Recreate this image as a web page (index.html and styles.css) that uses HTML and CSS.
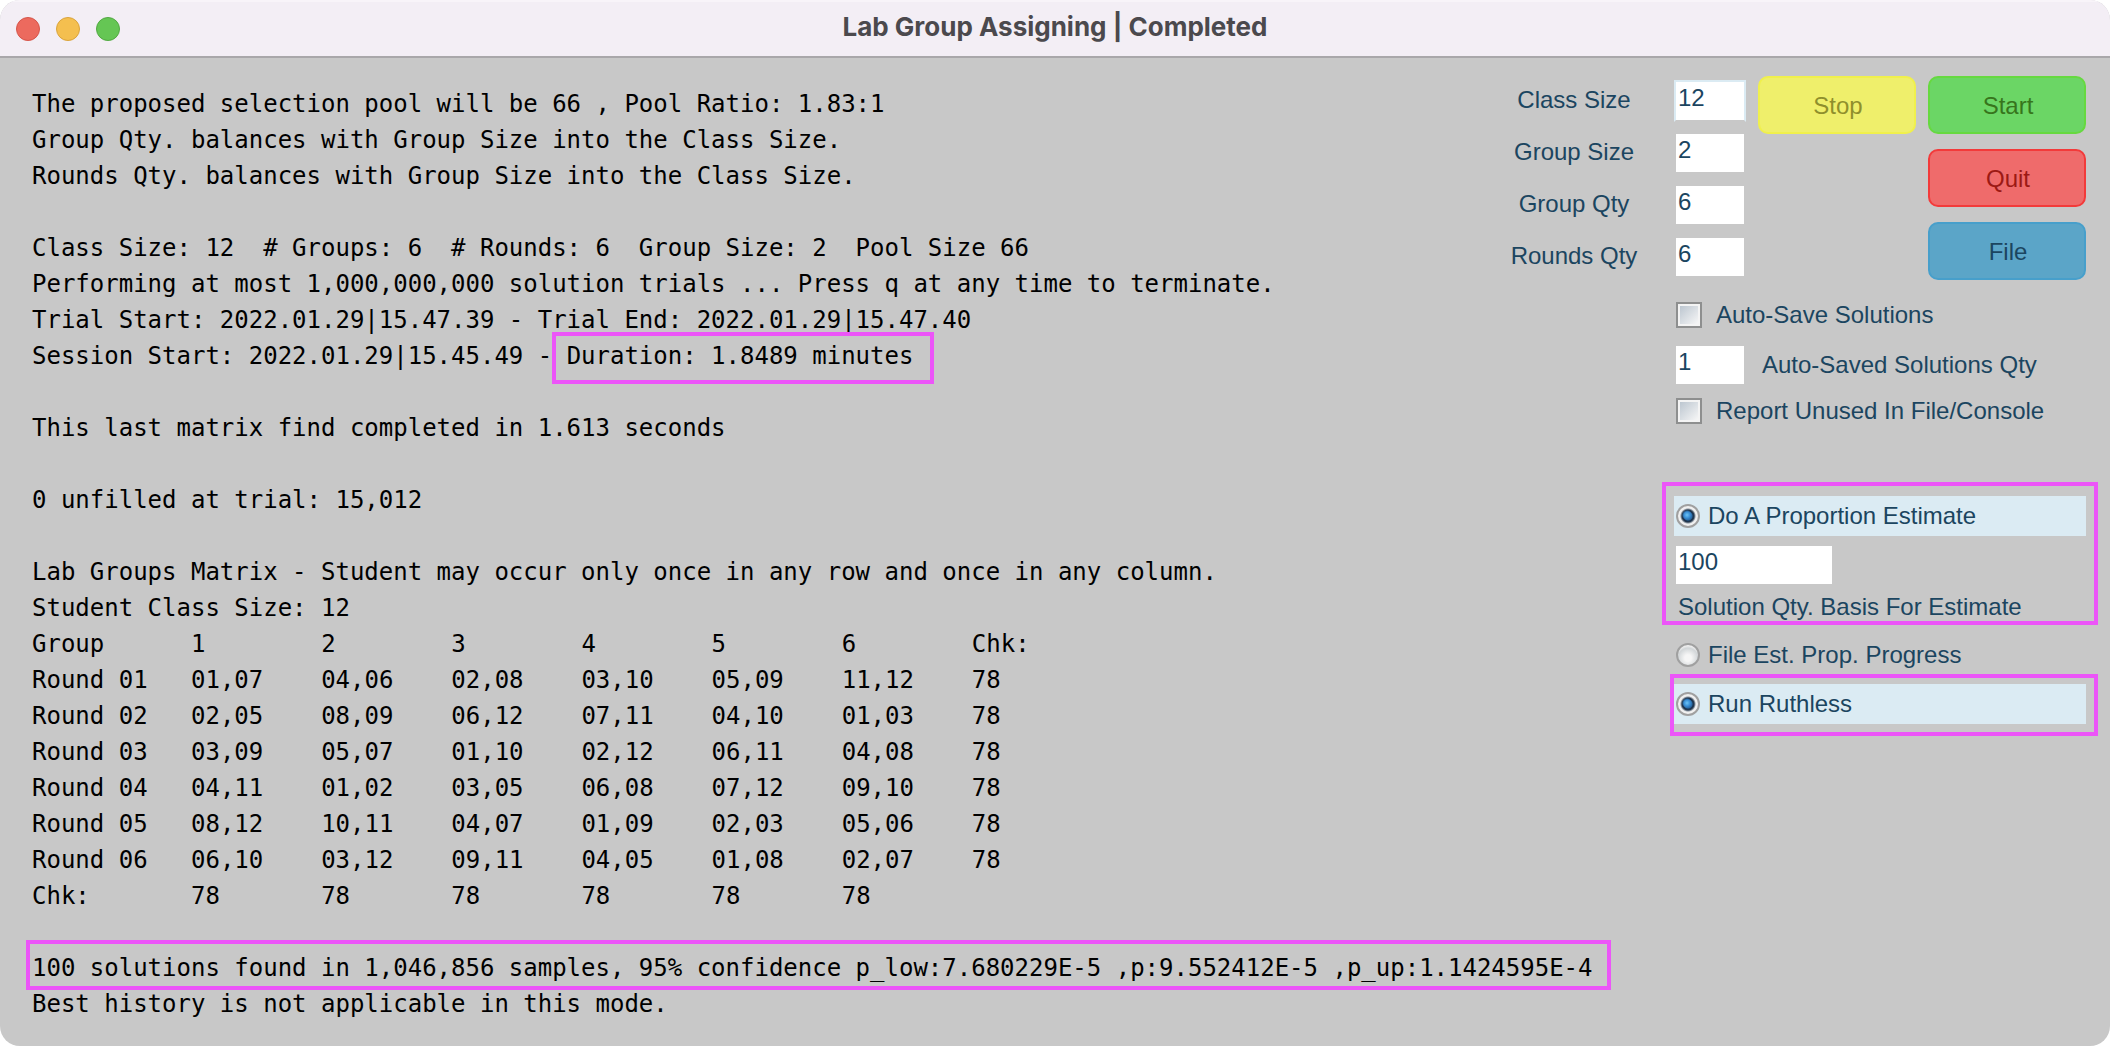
FILE: index.html
```html
<!DOCTYPE html>
<html lang="en">
<head>
<meta charset="utf-8">
<title>Lab Group Assigning | Completed</title>
<link rel="stylesheet" href="styles.css">
</head>
<body>
<div class="window">
  <header class="titlebar">
    <div class="lights">
      <button class="light light-close" type="button" aria-label="Close"></button>
      <button class="light light-minimize" type="button" aria-label="Minimize"></button>
      <button class="light light-zoom" type="button" aria-label="Zoom"></button>
    </div>
    <h1 class="title">Lab Group Assigning | Completed</h1>
  </header>
  <div class="content">
    <main class="console">
      <p class="line">The proposed selection pool will be 66 , Pool Ratio: 1.83:1</p>
      <p class="line">Group Qty. balances with Group Size into the Class Size.</p>
      <p class="line">Rounds Qty. balances with Group Size into the Class Size.</p>
      <p class="line"></p>
      <p class="line">Class Size: 12  # Groups: 6  # Rounds: 6  Group Size: 2  Pool Size 66</p>
      <p class="line">Performing at most 1,000,000,000 solution trials ... Press q at any time to terminate.</p>
      <p class="line">Trial Start: 2022.01.29|15.47.39 - Trial End: 2022.01.29|15.47.40</p>
      <p class="line">Session Start: 2022.01.29|15.45.49 - <span class="mark mark-duration">Duration: 1.8489 minutes</span></p>
      <p class="line"></p>
      <p class="line">This last matrix find completed in 1.613 seconds</p>
      <p class="line"></p>
      <p class="line">0 unfilled at trial: 15,012</p>
      <p class="line"></p>
      <p class="line">Lab Groups Matrix - Student may occur only once in any row and once in any column.</p>
      <p class="line">Student Class Size: 12</p>
      <table class="matrix">
        <thead>
          <tr><th class="name">Group</th><th>1</th><th>2</th><th>3</th><th>4</th><th>5</th><th>6</th><th>Chk:</th></tr>
        </thead>
        <tbody>
          <tr><th>Round 01</th><td>01,07</td><td>04,06</td><td>02,08</td><td>03,10</td><td>05,09</td><td>11,12</td><td>78</td></tr>
          <tr><th>Round 02</th><td>02,05</td><td>08,09</td><td>06,12</td><td>07,11</td><td>04,10</td><td>01,03</td><td>78</td></tr>
          <tr><th>Round 03</th><td>03,09</td><td>05,07</td><td>01,10</td><td>02,12</td><td>06,11</td><td>04,08</td><td>78</td></tr>
          <tr><th>Round 04</th><td>04,11</td><td>01,02</td><td>03,05</td><td>06,08</td><td>07,12</td><td>09,10</td><td>78</td></tr>
          <tr><th>Round 05</th><td>08,12</td><td>10,11</td><td>04,07</td><td>01,09</td><td>02,03</td><td>05,06</td><td>78</td></tr>
          <tr><th>Round 06</th><td>06,10</td><td>03,12</td><td>09,11</td><td>04,05</td><td>01,08</td><td>02,07</td><td>78</td></tr>
          <tr><th>Chk:</th><td>78</td><td>78</td><td>78</td><td>78</td><td>78</td><td>78</td><td></td></tr>
        </tbody>
      </table>
      <p class="line"></p>
      <p class="line"><span class="mark mark-result">100 solutions found in 1,046,856 samples, 95% confidence p_low:7.680229E-5 ,p:9.552412E-5 ,p_up:1.1424595E-4</span></p>
      <p class="line">Best history is not applicable in this mode.</p>
    </main>
    <aside class="panel">
      <div class="setup">
        <div class="fields">
          <label for="class-size">Class Size</label><input class="field field-active" id="class-size" type="text" value="12">
          <label for="group-size">Group Size</label><input class="field" id="group-size" type="text" value="2">
          <label for="group-qty">Group Qty</label><input class="field" id="group-qty" type="text" value="6">
          <label for="rounds-qty">Rounds Qty</label><input class="field" id="rounds-qty" type="text" value="6">
        </div>
        <div class="actions">
          <button class="action stop" type="button">Stop</button>
          <div class="stack">
            <button class="action start" type="button">Start</button>
            <button class="action quit" type="button">Quit</button>
            <button class="action file" type="button">File</button>
          </div>
        </div>
      </div>
      <div class="options">
        <label class="check-row"><input class="check" type="checkbox">Auto-Save Solutions</label>
        <div class="qty-row">
          <input class="field" id="saved-qty" type="text" value="1">
          <label for="saved-qty">Auto-Saved Solutions Qty</label>
        </div>
        <label class="check-row"><input class="check" type="checkbox">Report Unused In File/Console</label>
      </div>
      <div class="estimate">
        <label class="radio-row selected"><input class="radio" type="radio" name="estimate" checked>Do A Proportion Estimate</label>
        <input class="field field-wide" id="basis" type="text" value="100">
        <label class="basis-label" for="basis">Solution Qty. Basis For Estimate</label>
      </div>
      <label class="radio-row progress"><input class="radio" type="radio" name="progress">File Est. Prop. Progress</label>
      <div class="ruthless">
        <label class="radio-row selected"><input class="radio" type="radio" name="ruthless" checked>Run Ruthless</label>
      </div>
    </aside>
  </div>
</div>
</body>
</html>
```
FILE: styles.css
```css
:root {
  --ink: #1b4560;
  --surface: #c8c8c8;
  --highlight: #dbebf3;
  --marker: #ec55f8;
}

* { box-sizing: border-box; }

body {
  margin: 0;
  background: #fff;
}

.window {
  display: flex;
  flex-direction: column;
  min-height: 100vh;
  border-radius: 20px;
  overflow: hidden;
  background: var(--surface);
}

/* Title bar */
.titlebar {
  display: grid;
  grid-template-columns: 1fr auto 1fr;
  align-items: center;
  height: 58px;
  padding: 0 16px;
  background: #f3eef5;
  border-top: 2px solid #f8f4f9;
  border-bottom: 2px solid #a9a7aa;
}

.lights {
  display: flex;
  gap: 16px;
}

.light {
  width: 24px;
  height: 24px;
  padding: 0;
  border: 1px solid;
  border-radius: 50%;
}

.light-close { background: #ec6a5e; border-color: #d5554a; }
.light-minimize { background: #f4bf4f; border-color: #d9a33c; }
.light-zoom { background: #65c654; border-color: #52a842; }

.title {
  margin: 0;
  padding-bottom: 4px;
  font: 700 26px/32px Inter, "Liberation Sans", sans-serif;
  color: #4b494d;
}

.content {
  display: flex;
  flex: 1;
}

/* Console output */
.console {
  flex: 1;
  min-width: 0;
  padding: 28px 0 24px 32px;
  font: 24px/36px "DejaVu Sans Mono", monospace;
  color: #000;
}

.line {
  margin: 0;
  min-height: 36px;
  white-space: pre;
}

.matrix {
  border-collapse: collapse;
  table-layout: fixed;
  width: 1070px;
}

.matrix th,
.matrix td {
  padding: 0;
  font-weight: 400;
  text-align: left;
}

.matrix .name { width: 159px; }

.mark { position: relative; }

.mark::after {
  content: "";
  position: absolute;
  border: 4px solid var(--marker);
}

.mark-duration::after { inset: -10px -21px -14px -15px; }
.mark-result::after { inset: -14px -18px -8px -6px; }

/* Control panel */
.panel {
  flex: none;
  width: 618px;
  padding: 18px 12px 0 0;
  font: 24px/28px "Liberation Sans", Arial, sans-serif;
  color: var(--ink);
}

.setup {
  display: flex;
  gap: 12px;
}

.fields {
  display: grid;
  grid-template-columns: 164px 72px;
  column-gap: 18px;
  row-gap: 10px;
  align-content: start;
  padding-top: 4px;
  line-height: 40px;
  text-align: center;
}

.field {
  width: 72px;
  height: 42px;
  padding: 0 0 6px 2px;
  border: 2px solid transparent;
  border-radius: 0;
  background: #fff;
  background-clip: padding-box;
  font: inherit;
  line-height: 28px;
  color: inherit;
}

.field-active {
  border-color: var(--highlight);
  border-bottom-color: transparent;
}

.actions {
  display: flex;
  align-items: flex-start;
  gap: 12px;
}

.stack {
  display: flex;
  flex-direction: column;
  gap: 15px;
}

.action {
  width: 158px;
  height: 58px;
  padding: 2px 0 0 2px;
  border: 2px solid;
  border-radius: 10px;
  font: inherit;
}

.stop { background: #efef6b; border-color: #f0f04c; color: #8f8f2c; }
.start { background: #6bd665; border-color: #66d940; color: #37751c; }
.quit { background: #ef6b6b; border-color: #f33a3a; color: #9c1914; }
.file { background: #5ba5c8; border-color: #479fcb; color: var(--ink); }

.options { padding: 22px 0 0 184px; }

.check-row {
  display: flex;
  align-items: center;
  gap: 14px;
  height: 26px;
}

.check {
  appearance: none;
  width: 26px;
  height: 26px;
  margin: 0;
  border: 2px solid #8e8f8f;
  background: linear-gradient(135deg, #bcc6d0, #f6f6f6) content-box, #f4f4f4;
  padding: 2px;
}

.qty-row {
  display: flex;
  align-items: center;
  gap: 16px;
  margin: 16px 0 12px -2px;
}

.estimate {
  margin: 58px 0 0 170px;
  padding: 10px 8px 0;
  border: 4px solid var(--marker);
}

.radio-row {
  display: flex;
  align-items: center;
  gap: 8px;
  height: 40px;
  padding-left: 2px;
}

.selected { background: var(--highlight); }

.radio {
  appearance: none;
  width: 24px;
  height: 24px;
  margin: 0;
  border: 2px solid #a0a0a0;
  border-radius: 50%;
  background: radial-gradient(circle at 50% 65%, #f6f6f6 20%, #d2d6d8 60%, #f0f0f0 75%);
}

.radio:checked {
  background:
    radial-gradient(circle at 9px 9px, #6cc4f6 0, #3a8fd6 3px, transparent 5px),
    radial-gradient(circle, #2a6ca8 4px, #1c3450 5px, #24384e 6px, #f0f0f0 8px);
}

.field-wide {
  display: block;
  width: 160px;
  margin-top: 8px;
}

.basis-label {
  display: block;
  margin-top: 7px;
  padding-left: 4px;
}

.progress {
  height: 38px;
  margin: 11px 0 0 182px;
}

.ruthless {
  margin-left: 178px;
  padding: 6px 8px 8px 0;
  border: 4px solid var(--marker);
}
```
